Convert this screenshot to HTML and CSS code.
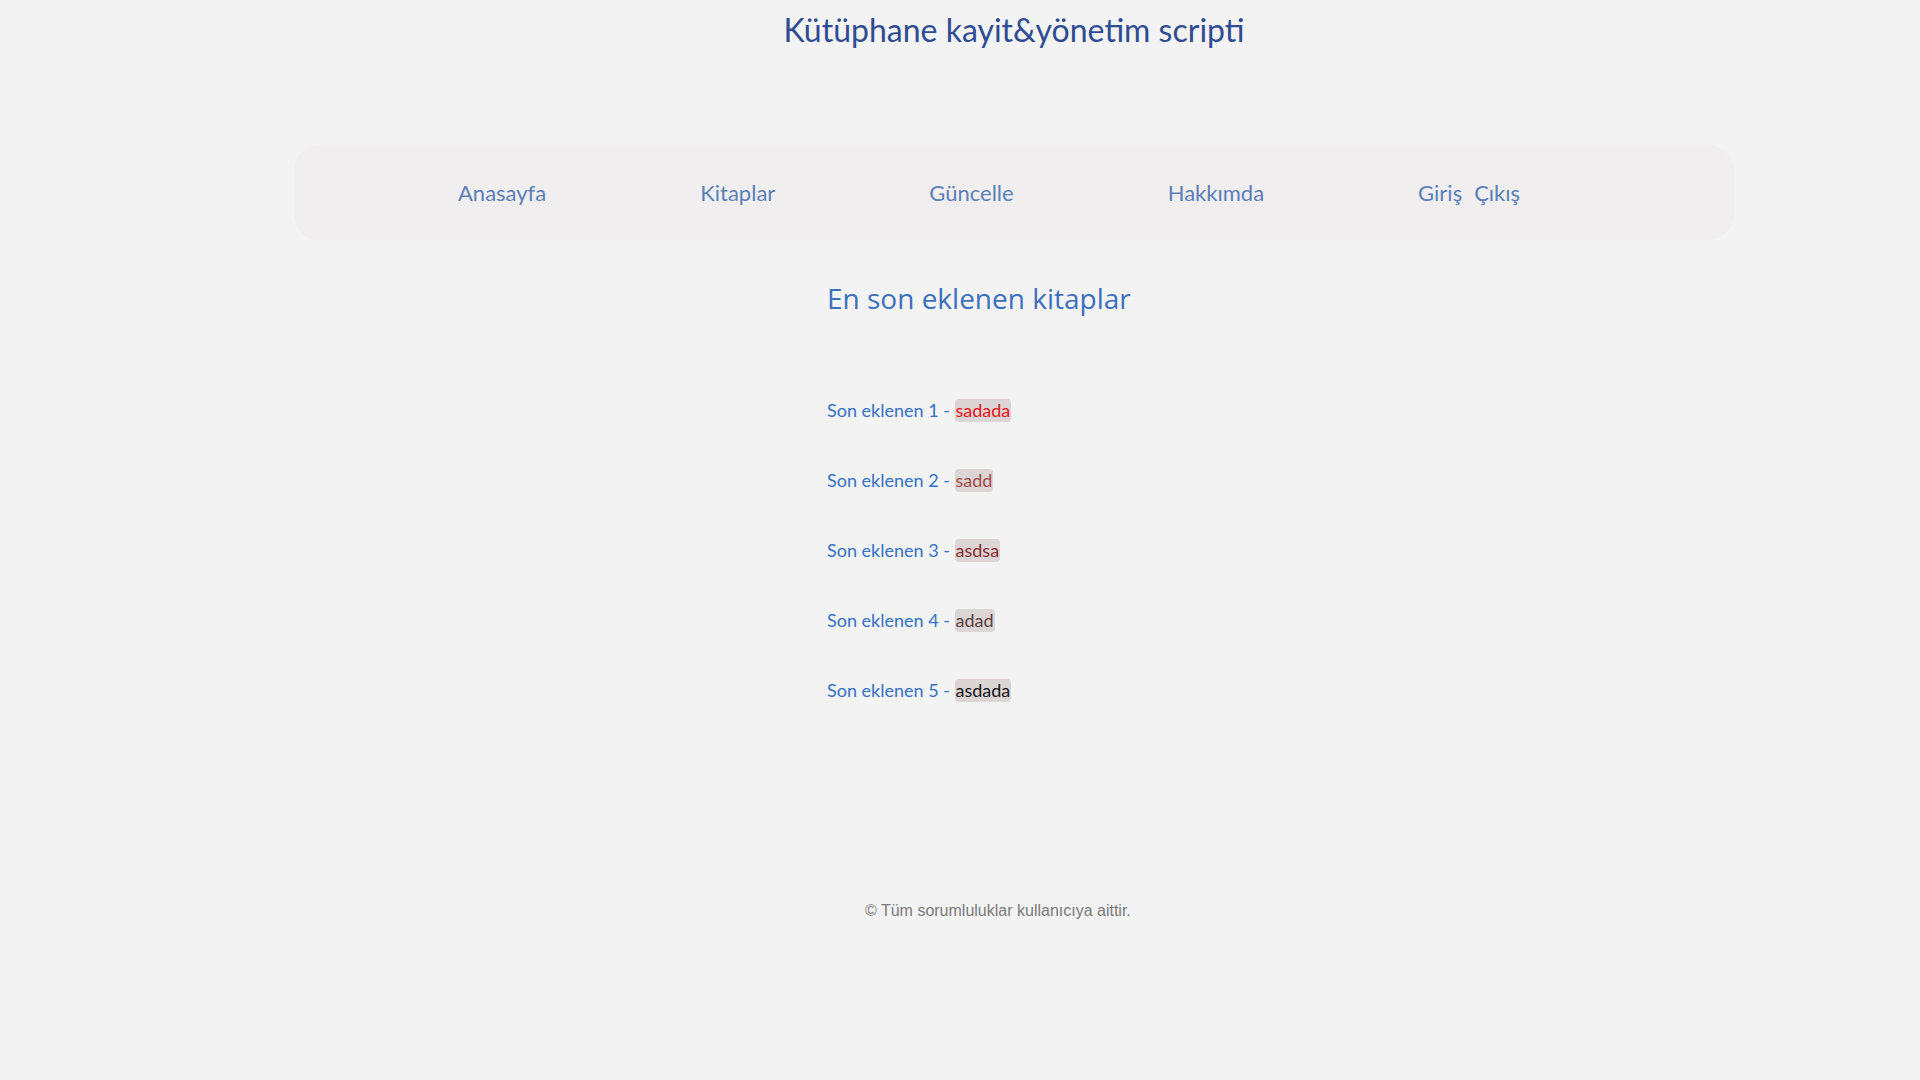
FILE: index.html
```html
<!DOCTYPE html>
<html lang="tr">
<head>
<meta charset="utf-8">
<title>Kütüphane kayit&amp;yönetim scripti</title>
<link rel="stylesheet" href="styles.css">
</head>
<body>
<div class="page">
  <header class="site-header">
    <h1 class="site-title">Kütüphane kayit&amp;yönetim scripti</h1>
  </header>
  <nav class="nav">
    <a class="nav-link" href="#">Anasayfa</a>
    <a class="nav-link" href="#">Kitaplar</a>
    <a class="nav-link" href="#">Güncelle</a>
    <a class="nav-link" href="#">Hakkımda</a>
    <span class="nav-link nav-pair"><a href="#">Giriş</a><a class="nav-sub" href="#">Çıkış</a></span>
  </nav>
  <main class="main">
    <h2 class="section-title">En son eklenen kitaplar</h2>
    <ul class="latest">
      <li class="latest-item">Son eklenen 1 - <span class="tag tag-1">sadada</span></li>
      <li class="latest-item">Son eklenen 2 - <span class="tag tag-2">sadd</span></li>
      <li class="latest-item">Son eklenen 3 - <span class="tag tag-3">asdsa</span></li>
      <li class="latest-item">Son eklenen 4 - <span class="tag tag-4">adad</span></li>
      <li class="latest-item">Son eklenen 5 - <span class="tag tag-5">asdada</span></li>
    </ul>
  </main>
  <footer class="footer">© Tüm sorumluluklar kullanıcıya aittir.</footer>
</div>
</body>
</html>
```
FILE: styles.css
```css
html, body {
  margin: 0;
  padding: 0;
  background: #f3f3f3;
}
.page {
  margin-left: 108px;
  width: 1812px;
  min-height: 1080px;
}
.site-header {
  text-align: center;
  padding-top: 4px;
}
.site-title {
  margin: 0;
  font-family: "Lato", sans-serif;
  font-weight: 400;
  font-size: 32px;
  line-height: 52px;
  color: #2f4c93;
}
.nav {
  width: 1440px;
  height: 95px;
  margin: 89px auto 0;
  box-sizing: border-box;
  background: #f0eeef;
  border-radius: 26px;
  display: flex;
  align-items: center;
  padding-left: 164px;
  gap: 154px;
  font-family: "Lato", sans-serif;
  font-size: 22px;
}
.nav-link, .nav-link a {
  color: #5b80b8;
  text-decoration: none;
}
.nav-sub {
  margin-left: 12px;
}
.main {
  margin-left: 719px;
  padding-top: 38px;
}
.section-title {
  margin: 0;
  font-family: "Open Sans", sans-serif;
  font-weight: 400;
  font-size: 28px;
  line-height: 40px;
  color: #3b70be;
}
.latest {
  list-style: none;
  margin: 81px 0 0;
  padding: 0;
  display: flex;
  flex-direction: column;
  gap: 47px;
}
.latest-item {
  font-family: "Lato", sans-serif;
  font-size: 18px;
  line-height: 23px;
  color: #3571c6;
}
.tag {
  display: inline-block;
  background: #dbd5d5;
  border-radius: 4px;
  padding: 0 1px;
}
.tag-1 { color: #e8141a; }
.tag-2 { color: #a54a46; }
.tag-3 { color: #8a2a2a; }
.tag-4 { color: #5a4040; }
.tag-5 { color: #151515; }
.footer {
  margin: 200px 0 0 0;
  padding-left: 757px;
  font-family: "Liberation Sans", Arial, sans-serif;
  font-size: 16px;
  color: #7a7a7a;
}
```
